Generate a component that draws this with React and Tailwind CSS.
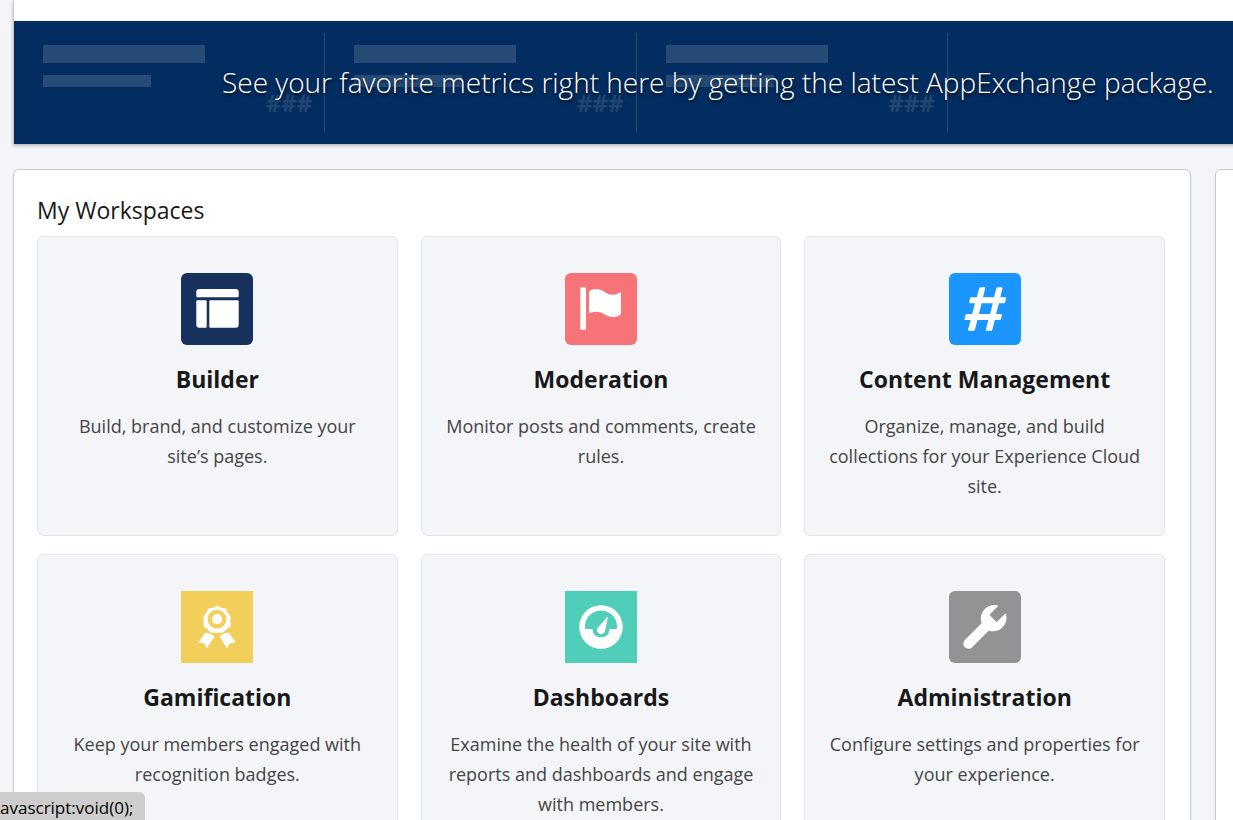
const workspaces = [
  {
    title: "Builder",
    description: "Build, brand, and customize your site’s pages.",
    icon: BuilderIcon,
    tile: "bg-[#16325c] rounded-md",
  },
  {
    title: "Moderation",
    description: "Monitor posts and comments, create rules.",
    icon: FlagIcon,
    tile: "bg-[#f67378] rounded-md",
  },
  {
    title: "Content Management",
    description:
      "Organize, manage, and build collections for your Experience Cloud site.",
    icon: HashIcon,
    tile: "bg-[#1b96ff] rounded-md",
  },
  {
    title: "Gamification",
    description: "Keep your members engaged with recognition badges.",
    icon: RibbonIcon,
    tile: "bg-[#f2cf5b]",
  },
  {
    title: "Dashboards",
    description:
      "Examine the health of your site with reports and dashboards and engage with members.",
    icon: GaugeIcon,
    tile: "bg-[#50ceb9]",
  },
  {
    title: "Administration",
    description: "Configure settings and properties for your experience.",
    icon: WrenchIcon,
    tile: "bg-[#939393] rounded-md",
  },
];

export default function App() {
  return (
    <div className="h-screen overflow-hidden bg-[#f3f5f9] pl-[13px] font-['Open_Sans','Noto_Sans',sans-serif] text-[#181818]">
      <MetricsBanner />

      <div className="mt-[25px] flex items-stretch gap-6">
        <main className="min-w-0 flex-1 rounded-md border border-[#c9c9c9] bg-white px-[23px] pt-[26px] pb-6 shadow-[0_2px_2px_rgba(0,0,0,0.1)]">
          <h2 className="text-[23px] leading-7">My Workspaces</h2>

          <div className="mt-3 grid grid-cols-3 gap-x-[23px] gap-y-[18px] pr-0.5">
            {workspaces.map((workspace) => (
              <WorkspaceCard key={workspace.title} workspace={workspace} />
            ))}
          </div>
        </main>

        <aside className="-mr-[366px] w-96 shrink-0 rounded-md border border-[#c9c9c9] bg-white shadow-[0_2px_2px_rgba(0,0,0,0.1)]" />
      </div>

      <div className="fixed bottom-0 left-0 h-7 rounded-tr-md bg-[#cdcdcd] pr-3 text-[17px] leading-8 text-black">
        avascript:void(0);
      </div>
    </div>
  );
}

function MetricsBanner() {
  return (
    <section className="-mr-[26px] border-l border-[#c9c9c9] bg-white pt-[21px] shadow-[0_2px_3px_rgba(0,0,0,0.25)]">
      <div className="relative bg-[#032d60] py-3">
        <div className="grid grid-cols-4">
          {[1, 2, 3].map((metric) => (
            <div
              key={metric}
              className="h-[99px] border-r border-[#254b77] pt-3 pr-3 pl-[29px]"
            >
              <div className="h-[18px] w-[162px] bg-[#264b75]" />
              <div className="mt-3 h-3 w-[108px] bg-[#264b75]" />
              <p className="text-right text-2xl leading-8 font-bold text-[#1f4672]">
                ###
              </p>
            </div>
          ))}
        </div>

        <p className="absolute inset-0 flex items-center pb-0.5 pl-52 text-[28px] font-light whitespace-nowrap text-white [text-shadow:0_2px_3px_rgba(0,0,0,0.8)]">
          See your favorite metrics right here by getting the latest AppExchange
          package.
        </p>
      </div>
    </section>
  );
}

function WorkspaceCard({ workspace }) {
  const Icon = workspace.icon;

  return (
    <a
      href="#"
      className="flex min-h-[300px] flex-col items-center rounded-md border border-[#e5e5e5] bg-[#f3f5f9] px-5 pt-9 text-center"
    >
      <span className={`block size-[72px] ${workspace.tile}`}>
        <Icon />
      </span>
      <h3 className="mt-5 text-[23px] leading-7 font-bold whitespace-nowrap">
        {workspace.title}
      </h3>
      <p className="mt-[18px] text-lg leading-[30px] text-[#444444]">
        {workspace.description}
      </p>
    </a>
  );
}

function BuilderIcon() {
  return (
    <svg viewBox="0 0 72 72" fill="#fff" aria-hidden="true">
      <path d="M18.3 16h36.4a3 3 0 0 1 3 3v4.3a1 1 0 0 1-1 1H16.3a1 1 0 0 1-1-1V19a3 3 0 0 1 3-3Z" />
      <path d="M16.3 27.3h8.4a1 1 0 0 1 1 1v25.4a1 1 0 0 1-1 1h-6.4a3 3 0 0 1-3-3V28.3a1 1 0 0 1 1-1Z" />
      <path d="M29.3 27.3h27.4a1 1 0 0 1 1 1v23.4a3 3 0 0 1-3 3H29.3a1 1 0 0 1-1-1V28.3a1 1 0 0 1 1-1Z" />
    </svg>
  );
}

function FlagIcon() {
  return (
    <svg viewBox="0 0 72 72" fill="#fff" aria-hidden="true">
      <rect x="15.3" y="14.3" width="5.7" height="42.5" rx="1.4" />
      <path d="M24.9 17.8C29.5 15.3 34.5 15.5 39.2 18.8c5.5 3.9 10.4 3.8 15.5.6.7-.4 1.2-.2 1.2.6v20.4c0 .7-.3 1.2-.9 1.6-5.2 3-10.8 2.6-16.2-.9-4.6-3-9-3.1-13.8-1.2-.6.2-.9 0-.9-.6V19.2c0-.6.2-1.1.8-1.4Z" />
    </svg>
  );
}

function HashIcon() {
  return (
    <svg viewBox="0 0 72 72" fill="#fff" aria-hidden="true">
      <path d="M31.3 14.3h4.1q1 0 .8 1l-2.2 9h11l2.4-9q.3-1 1.3-1h4q1 0 .8 1l-2.2 9h5q1 0 .8 1l-1 4q-.2 1-1.2 1h-5L47.1 41h5q1 0 .8 1l-.9 4q-.2 1-1.2 1h-5l-2.4 9.5q-.3 1.2-1.3 1.2h-4.5q-1 0-.8-1L39.4 47h-11L26 56.5q-.3 1.2-1.3 1.2h-4.9q-1 0-.8-1l2.7-9.7h-5.4q-1 0-.8-1l1-4q.2-1 1.2-1h5.5l2.8-10.7h-5q-1 0-.8-1l.9-4q.2-1 1.2-1h5.5l2.4-9q.3-1 1.3-1ZM32.6 30.3 29.9 41h11.2l2.7-10.7Z" />
    </svg>
  );
}

function RibbonIcon() {
  return (
    <svg viewBox="0 0 72 72" fill="#fff" aria-hidden="true">
      <path
        fillRule="evenodd"
        d="M36 14.3q2.2 2.5 4.7 2.4l4.4 1.1q.4 3.3 2.3 4.7l2.4 3.8q-1.3 2.9-.2 5.1l-.3 4.5q-3 .7-4.1 2.9l-3.5 3q-3.1-.9-5.7.2-2.6-1.1-5.7-.2l-3.5-3q-1.1-2.2-4.1-2.9l-.3-4.5q1.1-2.2-.2-5.1l2.4-3.8q1.9-1.4 2.3-4.7l4.4-1.1q2.5.1 4.7-2.4ZM36 18.7a9.4 9.4 0 1 0 0 18.8a9.4 9.4 0 0 0 0-18.8Z"
      />
      <circle cx="36" cy="28.1" r="5.1" />
      <path d="M24.2 41.7q5.5-.4 9.1 4L26 57.3l-2.9-5.1-5.8-.9Z" />
      <path d="M47.8 41.7q-5.5-.4-9.1 4L46 57.3l2.9-5.1 5.8-.9Z" />
    </svg>
  );
}

function GaugeIcon() {
  return (
    <svg viewBox="0 0 72 72" fill="#fff" aria-hidden="true">
      <path
        fillRule="evenodd"
        d="M36 14.2a21.8 21.8 0 1 0 0 43.6a21.8 21.8 0 0 0 0-43.6ZM20.2 38a16 16 0 1 1 31.6 0h-7.2q-.5 8.2-8.6 8.2T27.4 38Z"
      />
      <path d="M42 26.2q.9-.5.8.5l-2.6 12.5a4.1 4.1 0 1 1-7.6-2.3Z" />
    </svg>
  );
}

function WrenchIcon() {
  return (
    <svg viewBox="0 0 72 72" fill="#fff" aria-hidden="true">
      <path d="M48.9 15.2 41.3 23q-.8.8 0 1.7l5.5 5.6q.9.8 1.7 0l7.3-7.2q1-.8 1.3.3c2.1 8.3-4.1 16.9-13.3 16.9q-2.3 0-4.2-.6L23.1 56.3a5.1 5.1 0 0 1-7.3-7.2l16.8-16.8q-.8-2.1-.8-4.3c0-9.1 8.2-15.4 16.8-13.6q.9.2.3.8Z" />
    </svg>
  );
}
